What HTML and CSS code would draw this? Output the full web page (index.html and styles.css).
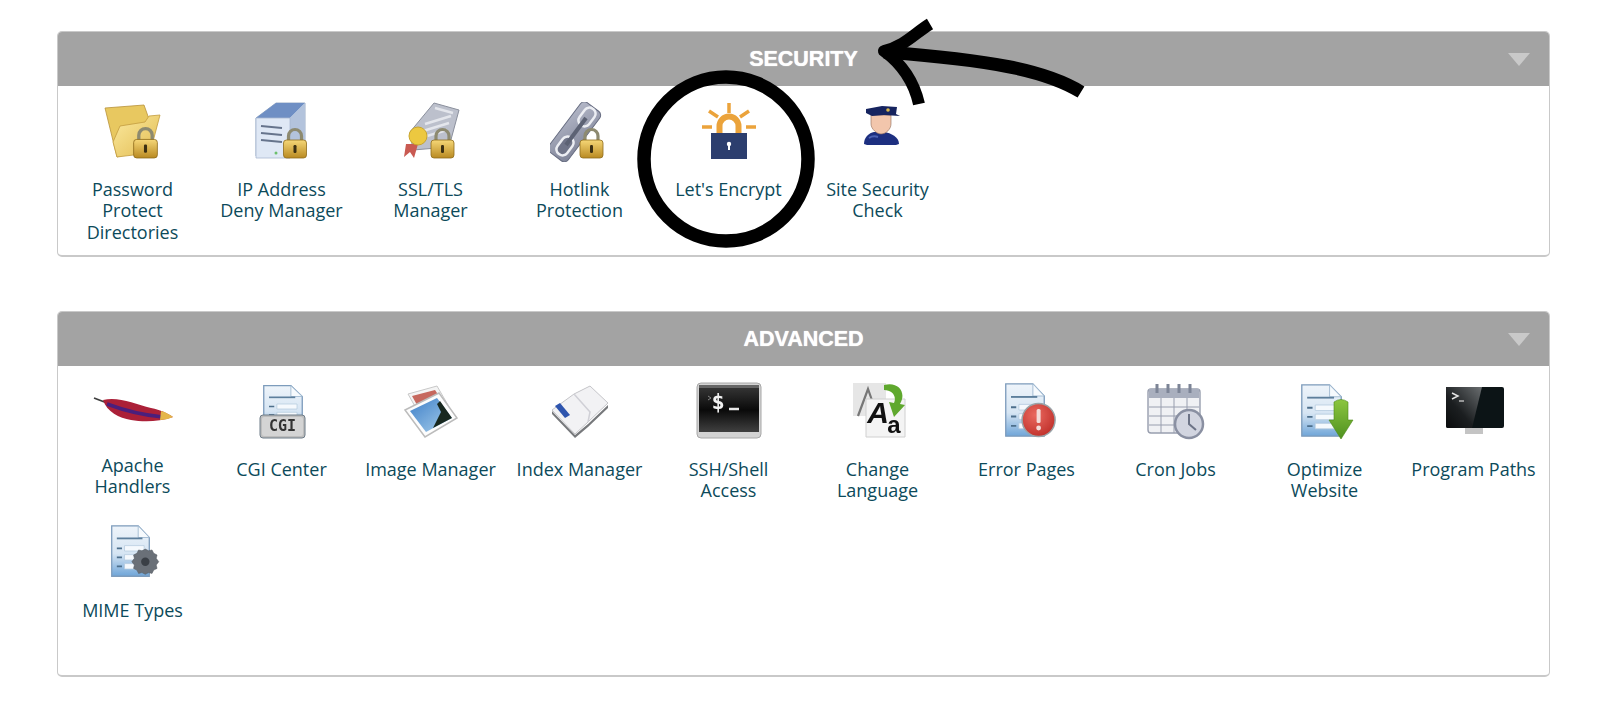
FILE: index.html
```html
<!DOCTYPE html>
<html lang="en">
<head>
    <meta charset="UTF-8">
    <meta name="viewport" content="width=device-width, initial-scale=1.0">
    <title>cPanel - Security and Advanced</title>
    <link rel="stylesheet" href="styles.css">
</head>
<body>

    <!-- Shared gradients and icon parts -->
    <svg class="icon-defs" aria-hidden="true">
        <defs>
            <linearGradient id="gold" x1="0" y1="0" x2="0" y2="1">
                <stop offset="0" stop-color="#f6d777"/>
                <stop offset="1" stop-color="#b98a22"/>
            </linearGradient>
            <linearGradient id="folder" x1="0" y1="0" x2="1" y2="1">
                <stop offset="0" stop-color="#fbeaa0"/>
                <stop offset="1" stop-color="#e2bb50"/>
            </linearGradient>
            <linearGradient id="paper" x1="0" y1="0" x2="0" y2="1">
                <stop offset="0" stop-color="#eef4fa"/>
                <stop offset="0.55" stop-color="#d6e5f3"/>
                <stop offset="1" stop-color="#6fa5d8"/>
            </linearGradient>
            <linearGradient id="screen" x1="0" y1="0" x2="0" y2="1">
                <stop offset="0" stop-color="#333"/>
                <stop offset="0.5" stop-color="#0a0a0a"/>
                <stop offset="1" stop-color="#404040"/>
            </linearGradient>
            <linearGradient id="monitor" x1="1" y1="0" x2="0" y2="1">
                <stop offset="0" stop-color="#6a6e70"/>
                <stop offset="0.6" stop-color="#1b1e20"/>
                <stop offset="1" stop-color="#0a0c0d"/>
            </linearGradient>
            <linearGradient id="steel" x1="0" y1="0" x2="1" y2="1">
                <stop offset="0" stop-color="#b4b8c8"/>
                <stop offset="1" stop-color="#7f8498"/>
            </linearGradient>
            <linearGradient id="green" x1="0" y1="0" x2="0" y2="1">
                <stop offset="0" stop-color="#8cc63f"/>
                <stop offset="1" stop-color="#4f9120"/>
            </linearGradient>
            <linearGradient id="sky" x1="0" y1="0" x2="1" y2="1">
                <stop offset="0" stop-color="#3e7fc8"/>
                <stop offset="1" stop-color="#a9d0ec"/>
            </linearGradient>
            <radialGradient id="alert" cx="0.4" cy="0.35" r="0.7">
                <stop offset="0" stop-color="#ea6a60"/>
                <stop offset="1" stop-color="#bf2f2a"/>
            </radialGradient>
            <symbol id="lock" viewBox="0 0 25 32">
                <path d="M6 15V9a6.500 6.500 0 0 1 13 0v6" fill="none" stroke="#8d8a70" stroke-width="3.200"/>
                <rect x="1" y="13" width="23" height="18" rx="3" fill="url(#gold)" stroke="#8f6c1c" stroke-width="0.800"/>
                <rect x="11" y="18" width="3" height="8" rx="1.200" fill="#3b2f12"/>
            </symbol>
            <symbol id="doc" viewBox="0 0 48 60" preserveAspectRatio="none">
                <path d="M2 2H33L46 15V58H2Z" fill="url(#paper)" stroke="#7d9cbc" stroke-width="1.500"/>
                <path d="M33 2V15H46Z" fill="#f6fafd" stroke="#9fb8d0"/>
                <path d="M8 16H38" stroke="#5d7f9c" stroke-width="2"/>
                <path d="M8 27H14M8 37H14M8 47H14" stroke="#4d6f8c" stroke-width="2"/>
                <path d="M17 24H40V30H17ZM17 34H40V40H17ZM17 44H40V50H17Z" fill="#f5f9fd" stroke="#b2c8dc" stroke-width="0.800"/>
            </symbol>
        </defs>
    </svg>

    <main class="page">

        <section class="panel panel-security">
            <header class="panel-header">
                <h2>SECURITY</h2>
                <span class="caret"></span>
            </header>
            <div class="icon-grid">
                <a class="tool">
                    <svg class="tool-icon" viewBox="0 0 60 60">
                        <path d="M2 6L41 3L46 17L44 46L14 55Z" fill="#e8c860" stroke="#b8923a" stroke-width="0.800"/>
                        <path d="M17 24L42 20L46 14L57 13L47 51L14 55L10 40Z" fill="url(#folder)" stroke="#c39c3f" stroke-width="0.800"/>
                        <use href="#lock" x="29" y="24" width="27" height="33"/>
                    </svg>
                    <span class="tool-label">Password Protect Directories</span>
                </a>
                <a class="tool">
                    <svg class="tool-icon" viewBox="0 0 60 60">
                        <path d="M4 16L24 1H53V54H4Z" fill="#dbe5f3" stroke="#9badc6"/>
                        <path d="M4 16L24 1H53L38 16Z" fill="#6f8fc4"/>
                        <path d="M38 16L53 1V54L38 56Z" fill="#b3c3dc"/>
                        <path d="M4 16H38V56H4Z" fill="#dfe8f5" stroke="#a8b8d0" stroke-width="0.800"/>
                        <path d="M9 24L30 26M9 31L30 33M9 38L30 40" stroke="#66748c" stroke-width="2"/>
                        <circle cx="24" cy="51" r="1.500" fill="#6cbf6c"/>
                        <use href="#lock" x="30" y="25" width="26" height="32"/>
                    </svg>
                    <span class="tool-label tool-label-narrow">IP Address Deny Manager</span>
                </a>
                <a class="tool">
                    <svg class="tool-icon" viewBox="0 0 60 60">
                        <path d="M9 30L33 1L58 8L48 45L12 48Z" fill="#bcc0cc" stroke="#8a8f9c"/>
                        <path d="M24 22L50 14M22 29L48 21M26 34L46 28M34 6L52 11" stroke="#e4e6ec" stroke-width="2.500"/>
                        <path d="M5 42L3 55L9 50L13 56L17 42Z" fill="#c95a52"/>
                        <circle cx="17" cy="34" r="9" fill="#ecc840" stroke="#c9a52c"/>
                        <use href="#lock" x="29" y="25" width="25" height="32"/>
                    </svg>
                    <span class="tool-label">SSL/TLS Manager</span>
                </a>
                <a class="tool">
                    <svg class="tool-icon" viewBox="0 0 60 60">
                        <rect x="13" y="-1" width="24" height="62" rx="5" transform="rotate(37 25 29)" fill="url(#steel)" stroke="#666c80"/>
                        <rect x="31" y="5" width="12" height="20" rx="5.500" transform="rotate(37 37 15)" fill="none" stroke="#eceef3" stroke-width="2.500"/>
                        <rect x="9" y="34" width="12" height="20" rx="5.500" transform="rotate(37 15 44)" fill="#6f7488" stroke="#eceef3" stroke-width="2.500"/>
                        <path d="M36 16L16 43" stroke="#5c6274" stroke-width="4"/>
                        <use href="#lock" x="29" y="25" width="25" height="32"/>
                    </svg>
                    <span class="tool-label">Hotlink Protection</span>
                </a>
                <a class="tool">
                    <svg class="tool-icon" viewBox="0 0 60 60">
                        <path d="M30 1V11M10 9L19 15M50 9L41 15M3 25H13M47 25H57" stroke="#eba33b" stroke-width="3.500" fill="none"/>
                        <path d="M20.500 32V24a9.500 9.500 0 0 1 19 0v8" fill="none" stroke="#eba33b" stroke-width="6"/>
                        <rect x="12" y="31" width="36" height="26" fill="#2c3e6e"/>
                        <circle cx="30" cy="42" r="2.200" fill="#fff"/>
                        <rect x="29" y="42" width="2" height="6" fill="#fff"/>
                    </svg>
                    <span class="tool-label">Let's Encrypt</span>
                </a>
                <a class="tool">
                    <svg class="tool-icon" viewBox="0 0 60 60">
                        <path d="M16 42C16 35 21 31 26 30H36C43 31 51 35 51 42L48 43H19Z" fill="#1d2f80"/>
                        <path d="M23 13V22C23 27 29 32 33 32C38 32 43 27 43 22V13Z" fill="#f2c6ac" stroke="#8f6a58" stroke-width="0.600"/>
                        <path d="M18 7L34 4L49 5L48 12L52 14L36 13L24 14L18 11Z" fill="#16245f"/>
                        <circle cx="40" cy="8" r="1.800" fill="#d8b84c"/>
                        <path d="M21 36C24 34 27 34 30 35" stroke="#4c62b4" stroke-width="2" fill="none"/>
                    </svg>
                    <span class="tool-label">Site Security Check</span>
                </a>
            </div>
        </section>

        <section class="panel panel-advanced">
            <header class="panel-header">
                <h2>ADVANCED</h2>
                <span class="caret"></span>
            </header>
            <div class="icon-grid">
                <a class="tool tool-tight">
                    <svg class="tool-icon tool-icon-wide" viewBox="0 0 80 60">
                        <path d="M1 16L14 21" stroke="#3e3e3e" stroke-width="1.800"/>
                        <path d="M10 18C25 14 42 22 58 26C68 28 74 31 80 35C66 40 50 40 38 38C26 36 14 30 10 18Z" fill="#ab2038"/>
                        <path d="M14 22C30 28 48 33 70 35" stroke="#4a1f7c" stroke-width="3.500" fill="none"/>
                        <path d="M68 29C73 30 77 33 80 35C76 37 71 38 67 38Z" fill="#e5b64a"/>
                    </svg>
                    <span class="tool-label">Apache Handlers</span>
                </a>
                <a class="tool">
                    <svg class="tool-icon" viewBox="0 0 60 60">
                        <use href="#doc" x="10" y="2" width="42" height="50"/>
                        <rect x="8" y="33" width="45" height="23" rx="3" fill="#bdbdbd" stroke="#6e7c88"/>
                        <rect x="10" y="35" width="41" height="19" rx="2" fill="#d4d4d4"/>
                        <text x="30.500" y="49" class="icon-text icon-text-cgi">CGI</text>
                    </svg>
                    <span class="tool-label">CGI Center</span>
                </a>
                <a class="tool">
                    <svg class="tool-icon" viewBox="0 0 60 60">
                        <path d="M7 12L36 4L47 23L20 35Z" fill="#f4f4f4" stroke="#c8c8c8"/>
                        <path d="M11 14L34 8L42 20L20 30Z" fill="#c6685e"/>
                        <path d="M4 28L38 11L56 36L24 55Z" fill="#fdfdfd" stroke="#bcbcbc" stroke-width="1.500"/>
                        <path d="M9 29L36 16L51 36L25 50Z" fill="url(#sky)"/>
                        <path d="M32 46L40 30L36 22L39 19L51 36Z" fill="#18281f"/>
                    </svg>
                    <span class="tool-label">Image Manager</span>
                </a>
                <a class="tool">
                    <svg class="tool-icon" viewBox="0 0 60 60">
                        <path d="M2 29L25 53L38 42L58 23V26L38 45L25 56L2 32Z" fill="#77797c"/>
                        <path d="M2 28L24 12L40 4L58 21L38 40L25 52Z" fill="#f2f2f4" stroke="#c4c4c8"/>
                        <path d="M24 12L40 30L38 40" stroke="#d0d0d6" stroke-width="1.500" fill="none"/>
                        <path d="M5 24L10 21L20 33L15 36Z" fill="#2e55ae"/>
                    </svg>
                    <span class="tool-label">Index Manager</span>
                </a>
                <a class="tool">
                    <svg class="tool-icon tool-icon-term" viewBox="0 0 66 60">
                        <rect x="1" y="1" width="64" height="55" rx="4" fill="#d3d3d3" stroke="#a8a8a8"/>
                        <rect x="3" y="3" width="60" height="4" fill="#666"/>
                        <rect x="3" y="6" width="60" height="44" fill="url(#screen)"/>
                        <text x="22" y="27" class="icon-text icon-text-shell">$</text>
                        <path d="M33 27H43" stroke="#e8e8e8" stroke-width="2.500"/>
                        <path d="M12 14L15 16L12 18" stroke="#888" fill="none"/>
                    </svg>
                    <span class="tool-label">SSH/Shell Access</span>
                </a>
                <a class="tool">
                    <svg class="tool-icon" viewBox="0 0 60 60">
                        <path d="M5 1H38V34H5Z" fill="#e6e6e6"/>
                        <path d="M10 34L20 7L26 24" fill="none" stroke="#777" stroke-width="2.200"/>
                        <path d="M18 17H57V55H18Z" fill="#f4f4f4" stroke="#d0d0d0"/>
                        <text x="30" y="41" class="icon-text icon-text-big-a">A</text>
                        <text x="46" y="51" class="icon-text icon-text-small-a">a</text>
                        <path d="M36 3C50 -1 59 10 52 22L57 23L46 35L41 20L46 21C49 14 44 8 36 8Z" fill="#5fa82e"/>
                    </svg>
                    <span class="tool-label">Change Language</span>
                </a>
                <a class="tool">
                    <svg class="tool-icon" viewBox="0 0 60 60">
                        <use href="#doc" x="7" y="0" width="42" height="56"/>
                        <circle cx="41.600" cy="38" r="16.500" fill="url(#alert)" stroke="#9aa3a8" stroke-width="1.500"/>
                        <rect x="39.600" y="27" width="4" height="14" rx="1.500" fill="#f3dcd9"/>
                        <circle cx="41.600" cy="46" r="2.400" fill="#f3dcd9"/>
                    </svg>
                    <span class="tool-label">Error Pages</span>
                </a>
                <a class="tool">
                    <svg class="tool-icon" viewBox="0 0 60 60">
                        <rect x="2" y="7" width="52" height="44" rx="3" fill="#f0f1f4" stroke="#989eae" stroke-width="1.400"/>
                        <rect x="3" y="7" width="50" height="9" fill="#a9afbe"/>
                        <path d="M11 2V11M22 2V11M33 2V11M44 2V11" stroke="#7c8496" stroke-width="3"/>
                        <path d="M3 25H53M3 34H53M3 43H53M15 16V51M28 16V51M41 16V51" stroke="#989eae"/>
                        <circle cx="43" cy="42" r="14" fill="#d2d5e0" stroke="#8a90a2" stroke-width="2.500"/>
                        <path d="M43 32V42L50 48" stroke="#6c7386" stroke-width="2" fill="none"/>
                    </svg>
                    <span class="tool-label">Cron Jobs</span>
                </a>
                <a class="tool">
                    <svg class="tool-icon" viewBox="0 0 60 60">
                        <use href="#doc" x="5" y="1" width="43" height="55"/>
                        <path d="M39 20Q46 15 53 20V38H58L46 57L34 38H39Z" fill="url(#green)" stroke="#4d8a1a" stroke-width="0.600"/>
                    </svg>
                    <span class="tool-label">Optimize Website</span>
                </a>
                <a class="tool">
                    <svg class="tool-icon" viewBox="0 0 60 60">
                        <rect x="2" y="5" width="58" height="41" rx="2" fill="#0c1416"/>
                        <path d="M2 5H38L28 46H4Q2 46 2 44Z" fill="url(#monitor)"/>
                        <path d="M8 11L14 14L8 17" stroke="#e4e4e4" stroke-width="1.500" fill="none"/>
                        <path d="M15 19H20" stroke="#b8b8b8" stroke-width="1.500"/>
                        <rect x="21" y="46" width="18" height="6" fill="#c4c4c4"/>
                    </svg>
                    <span class="tool-label">Program Paths</span>
                </a>
                <a class="tool">
                    <svg class="tool-icon" viewBox="0 0 60 60">
                        <use href="#doc" x="7" y="1" width="41" height="54"/>
                        <g transform="translate(42.300 38.700) scale(0.840) translate(-42 -41)">
                            <path d="M38 28L42 26L46 28L50 27L52 31L56 33L55 37L58 41L55 45L56 49L52 51L50 55L46 54L42 56L38 54L34 55L32 51L28 49L29 45L26 41L29 37L28 33L32 31L34 27Z" fill="#6a7078" stroke="#50565e" stroke-width="0.600"/>
                            <circle cx="42" cy="41" r="5" fill="#3a3f46"/>
                        </g>
                    </svg>
                    <span class="tool-label">MIME Types</span>
                </a>
            </div>
        </section>

    </main>

    <!-- Hand drawn marks on top of the screenshot -->
    <svg class="markup" viewBox="0 0 1600 711" aria-hidden="true">
        <circle cx="726" cy="159" r="82" class="markup-line markup-ring"/>
        <path d="M1081 92C1045 70 990 60 884 52" class="markup-line"/>
        <path d="M930 24C915 33 905 46 884 51C902 64 914 82 919 104" class="markup-line markup-head"/>
    </svg>

</body>
</html>
```

FILE: styles.css
```css
/* General Styling */
body {
    font-family: "Open Sans", Arial, sans-serif;
    margin: 0;
    padding: 0;
    background-color: #fff;
    color: #0c4a5a;
}

.icon-defs {
    position: absolute;
    width: 0;
    height: 0;
}

.page {
    padding: 31px 50px 0 57px;
}

/* Panels */
.panel {
    border: 1px solid #c9c9c9;
    border-bottom-width: 2px;
    border-radius: 5px;
    overflow: hidden;
    box-sizing: border-box;
}

.panel-security {
    height: 226px;
    margin-bottom: 54px;
}

.panel-advanced {
    height: 366px;
}

.panel-header {
    display: grid;
    grid-template-columns: 1fr auto 1fr;
    align-items: center;
    height: 54px;
    background-color: #a3a3a3;
    color: #fff;
}

.panel-header h2 {
    grid-column: 2;
    margin: 0;
    font-family: "Liberation Sans", Arial, sans-serif;
    font-size: 21.5px;
    font-weight: bold;
    text-shadow: 0 0 1px #fff;
}

.caret {
    justify-self: end;
    width: 0;
    height: 0;
    margin-right: 19px;
    border-left: 11px solid transparent;
    border-right: 11px solid transparent;
    border-top: 13px solid #c9c9c9;
}

/* Icon Grid */
.icon-grid {
    display: grid;
    grid-template-columns: repeat(10, 149px);
    grid-auto-rows: 141px;
    padding-top: 16px;
}

.tool {
    display: flex;
    flex-direction: column;
    align-items: center;
    text-align: center;
    font-size: 18px;
    line-height: 21.4px;
}

.tool-icon {
    flex: none;
    width: 60px;
    height: 60px;
    margin-bottom: 17px;
    filter: blur(0.5px);
}

.tool-icon-wide {
    width: 80px;
}

.tool-icon-term {
    width: 66px;
}

.tool-tight .tool-icon {
    margin-bottom: 13px;
}

.tool-label {
    width: 135px;
}

.tool-label-narrow {
    width: 125px;
}

/* Text inside icons */
.icon-text {
    font-family: "DejaVu Sans Mono", monospace;
    font-weight: bold;
    text-anchor: middle;
}

.icon-text-cgi {
    font-size: 15px;
    fill: #333;
}

.icon-text-shell {
    font-size: 22px;
    fill: #f2f2f2;
}

.icon-text-big-a {
    font-family: "Liberation Sans", Arial, sans-serif;
    font-style: italic;
    font-size: 30px;
    fill: #111;
}

.icon-text-small-a {
    font-family: "Liberation Sans", Arial, sans-serif;
    font-size: 24px;
    fill: #111;
}

/* Markup over the page */
.markup {
    position: absolute;
    top: 0;
    left: 0;
    width: 1600px;
    height: 711px;
    pointer-events: none;
}

.markup-line {
    fill: none;
    stroke: #000;
    stroke-width: 13;
}

.markup-ring {
    stroke-width: 13.5;
}

.markup-head {
    stroke-linejoin: round;
    stroke-width: 12;
}
```
